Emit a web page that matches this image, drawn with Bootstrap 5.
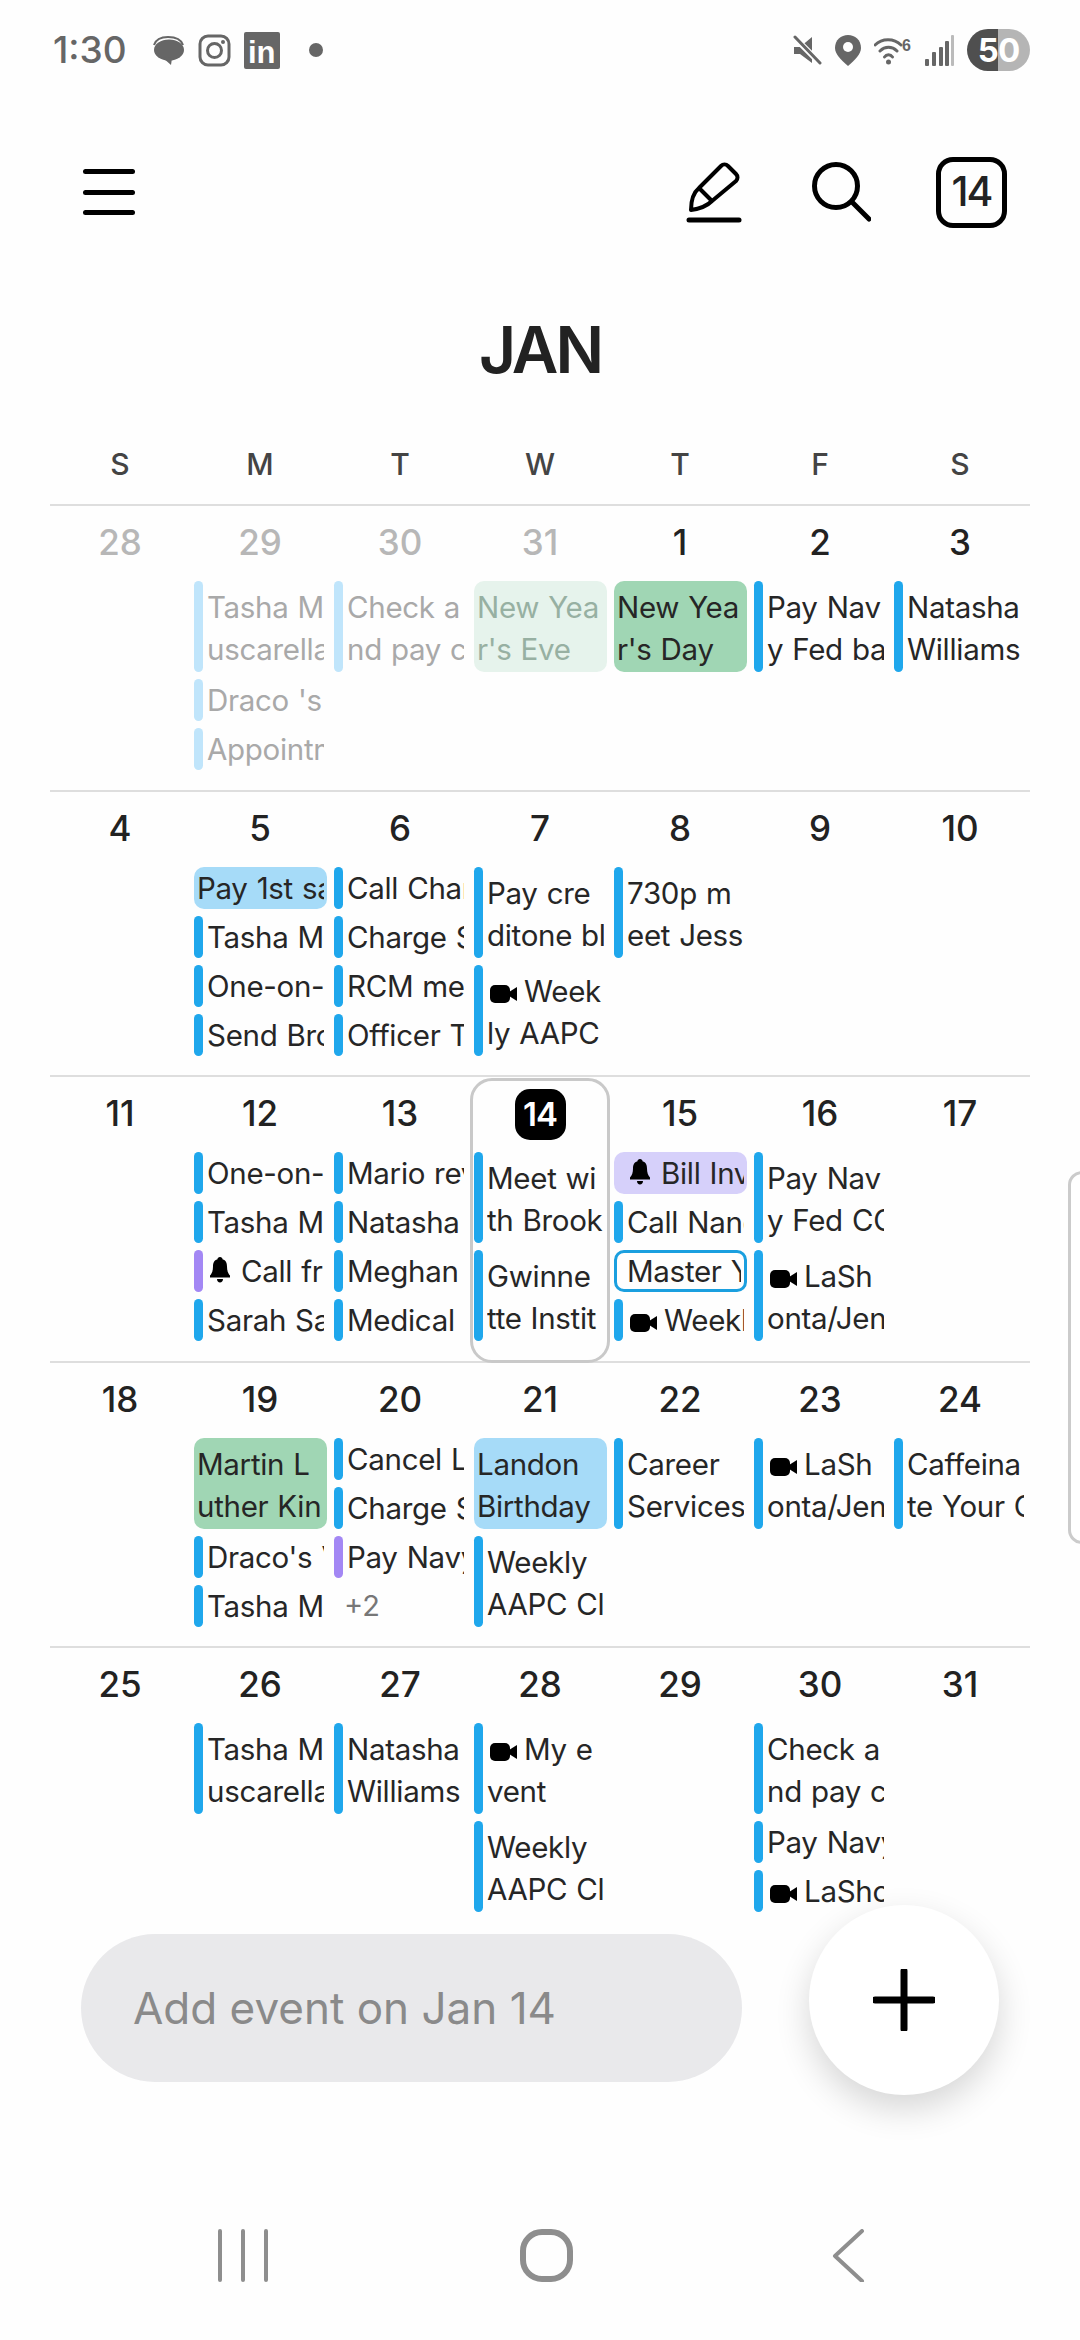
<!doctype html>
<html lang="en">
  <head>
    <meta charset="UTF-8" />
    <meta name="viewport" content="width=device-width, initial-scale=1.0" />
    <title>Calendar</title>
    <link href="https://cdn.jsdelivr.net/npm/bootstrap@5.3.0/dist/css/bootstrap.min.css" rel="stylesheet" />
    <style>
      body {
        width: 1080px;
        height: 2340px;
        overflow: hidden;
        background: #fefefe;
        font-family: Inter, "Liberation Sans", sans-serif;
        color: #222;
      }
      .screen {
        height: 2340px;
        overflow: hidden;
      }
      .status-bar {
        height: 100px;
        padding: 0 50px 0 53px;
        color: #666;
      }
      .status-time {
        font-size: 37px;
        font-weight: 500;
        width: 100px;
      }
      .st-left svg {
        margin-right: 13px;
      }
      .st-right svg {
        margin-right: 13px;
      }
      .batt {
        width: 63px;
        height: 42px;
        border-radius: 21px;
        background: linear-gradient(90deg, #4f4f4f 50%, #b5b5b5 50%);
        color: #fff;
        font-size: 33px;
        font-weight: 700;
        line-height: 42px;
        letter-spacing: -1px;
      }
      .app-bar {
        height: 184px;
        padding: 0 73px 0 83px;
      }
      .burger {
        width: 52px;
        height: 46px;
      }
      .burger span {
        height: 5px;
        border-radius: 3px;
        background: #000;
      }
      .pencil-ico {
        margin-right: 70px;
      }
      .search-ico {
        margin-right: 65px;
      }
      .today-btn {
        width: 71px;
        height: 71px;
        border: 5px solid #000;
        border-radius: 17px;
        font-size: 41px;
        font-weight: 500;
        letter-spacing: -2px;
        color: #222;
      }
      .month-title {
        height: 132px;
        margin: 0;
        font-size: 64px;
        font-weight: 600;
        line-height: 132px;
        letter-spacing: -3px;
        color: #222;
      }
      .cal-wrap {
        padding: 0 50px;
      }
      .weekdays {
        height: 88px;
        line-height: 96px;
        font-size: 30px;
        font-weight: 500;
        color: #444;
      }
      .cal-weeks {
        height: 1430px;
        overflow: hidden;
      }
      .week {
        height: 285.5px;
        border-top: 2px solid #dedede;
      }
      .day-cell {
        position: relative;
        min-width: 0;
      }
      .day-num {
        height: 75px;
        line-height: 73px;
        font-size: 35px;
        font-weight: 500;
        text-align: center;
        color: #222;
      }
      .past .day-num {
        color: #b7b7b7;
      }
      .ev {
        display: flex;
        width: 133px;
        height: 42px;
        margin: 0 3px 7px 4px;
        border-radius: 5px;
        font-size: 29.5px;
        line-height: 42px;
        color: #262626;
        letter-spacing: -0.3px;
        word-spacing: 1px;
        white-space: nowrap;
      }
      .ev::before {
        content: "";
        flex: 0 0 9px;
        margin-right: 4px;
        border-radius: 5px;
        background: #1fa7ec;
      }
      .ev-txt {
        flex: 1;
        min-width: 0;
        margin-right: 3px;
        overflow: hidden;
      }
      .ev-txt span {
        display: block;
      }
      .tall {
        height: 91px;
      }
      .tall .ev-txt {
        padding-top: 5px;
      }
      .ev svg {
        vertical-align: -1px;
      }
      .vid-ico {
        margin-left: 3px;
        margin-right: -2px;
      }
      .bell-ico {
        margin-left: 3px;
        margin-right: 2px;
      }
      .solid {
        border-radius: 10px;
        padding-left: 3px;
      }
      .solid::before {
        display: none;
      }
      .ev-green {
        background: #a0d6b4;
      }
      .ev-sky {
        background: #a6dbf8;
      }
      .ev-lilac {
        background: #d6d0fa;
      }
      .ev-lilac .ev-txt,
      .ev-outline .ev-txt {
        padding-left: 10px;
      }
      .ev-outline {
        border: 3px solid #1a9fdf;
        line-height: 36px;
        padding-left: 0;
      }
      .ev-purple::before {
        background: #a387f4;
      }
      .past .ev {
        color: #a9a9a9;
      }
      .past .ev::before {
        background: #c0e5fb;
      }
      .past .ev-mint {
        background: #e6f3ec;
        color: #97b0a2;
      }
      .more-count {
        height: 42px;
        padding-left: 14px;
        font-size: 29px;
        line-height: 42px;
        color: #777;
      }
      .today-frame {
        position: absolute;
        top: 1px;
        left: 0;
        right: 0;
        bottom: -2px;
        border: 3px solid #c9c9c9;
        border-radius: 22px;
        pointer-events: none;
      }
      .today-chip {
        display: inline-block;
        width: 51px;
        height: 51px;
        border-radius: 15px;
        background: #000;
        color: #fff;
        font-size: 33px;
        font-weight: 600;
        line-height: 51px;
        letter-spacing: -1px;
      }
      .add-bar {
        width: 661px;
        height: 148px;
        margin-left: 81px;
        padding-left: 52px;
        background: #e9e9eb;
        font-size: 44px;
        color: #8a8a8a;
      }
      .fab {
        position: absolute;
        left: 809px;
        top: 1905px;
        width: 190px;
        height: 190px;
        background: #fff;
        box-shadow: 0 14px 34px rgba(0, 0, 0, 0.16);
      }
      .edge-handle {
        position: absolute;
        left: 1068px;
        top: 1171px;
        width: 30px;
        height: 373px;
        border: 3px solid #cbcbcb;
        border-radius: 14px;
        background: #fff;
      }
      .nav-bar {
        height: 53px;
        margin-top: 147px;
      }
    </style>
  </head>
  <body>
    <div class="screen position-relative">
      <div class="status-bar d-flex align-items-center">
        <span class="status-time">1:30</span>
        <div class="st-left d-flex align-items-center">
          <svg width="32" height="31" viewBox="0 0 32 31">
            <path d="M1 10C3 4 8 2 15 2s13 2 15 8" fill="none" stroke="#666" stroke-width="2" />
            <ellipse cx="16" cy="15" rx="15" ry="10.500" fill="#666" />
            <path d="M9 22l9 8 1-7z" fill="#666" />
          </svg>
          <svg width="33" height="33" viewBox="0 0 33 33">
            <rect x="2" y="2" width="29" height="29" rx="8" fill="none" stroke="#666" stroke-width="3" />
            <circle cx="16.500" cy="16.500" r="7" fill="none" stroke="#666" stroke-width="3" />
            <circle cx="25" cy="8" r="2" fill="#666" />
          </svg>
          <svg width="36" height="37" viewBox="0 0 36 37">
            <rect width="36" height="37" rx="2" fill="#666" />
            <text x="4" y="31" font-family="Liberation Sans" font-weight="700" font-size="31" fill="#fefefe">in</text>
          </svg>
          <svg class="ms-3" width="14" height="14" viewBox="0 0 14 14"><circle cx="7" cy="7" r="7" fill="#666" /></svg>
        </div>
        <div class="st-right d-flex align-items-center ms-auto">
          <svg width="30" height="30" viewBox="0 0 30 30">
            <path d="M2 12h6L20 2v26L8 19H2z" fill="#666" />
            <path d="M2 2l26 26" stroke="#fefefe" stroke-width="6" />
            <path d="M3 2l25 26" stroke="#666" stroke-width="3" stroke-linecap="round" />
          </svg>
          <svg width="26" height="31" viewBox="0 0 26 31">
            <path d="M13 0C6 0 0 5 0 13c0 6 6 12 13 18 7-6 13-12 13-18C26 5 20 0 13 0z" fill="#666" />
            <circle cx="13" cy="12" r="5" fill="#fefefe" />
          </svg>
          <svg width="37" height="30" viewBox="0 0 37 30">
            <path d="M1 10C8 3 20 3 27 10M6 16c5-5 12-5 17 0M10.500 22c2-3 6-3 8 0" fill="none" stroke="#666" stroke-width="3" stroke-linecap="round" />
            <circle cx="14.500" cy="27" r="2.500" fill="#666" />
            <text x="28" y="16" font-family="Liberation Sans" font-weight="700" font-size="16" fill="#666">6</text>
          </svg>
          <svg width="30" height="31" viewBox="0 0 30 31">
            <rect x="1" y="24" width="4" height="7" rx="1" fill="#666" />
            <rect x="8" y="17" width="4" height="14" rx="1" fill="#666" />
            <rect x="15" y="12" width="4" height="19" rx="1" fill="#666" />
            <rect x="21" y="6" width="4" height="25" rx="1" fill="#666" />
            <rect x="27" y="0" width="3" height="31" rx="1" fill="#bbb" />
          </svg>
          <div class="batt text-center">50</div>
        </div>
      </div>

      <div class="app-bar d-flex align-items-center">
        <div class="burger d-flex flex-column justify-content-between"><span></span><span></span><span></span></div>
        <svg class="pencil-ico ms-auto" width="56" height="62" viewBox="0 0 56 62">
          <path d="M5 49C5 40 7 32 13 27L35 5c2-2 5-2 7 0l8 8c2 2 2 5 0 7L26 40C20 46 12 48 5 49z" fill="none" stroke="#000" stroke-width="4" stroke-linejoin="round" />
          <path d="M13 27l13 13" stroke="#000" stroke-width="4" />
          <path d="M3 59h50" stroke="#000" stroke-width="5" stroke-linecap="round" />
        </svg>
        <svg class="search-ico" width="59" height="60" viewBox="0 0 59 60">
          <circle cx="24" cy="24" r="21.500" fill="none" stroke="#000" stroke-width="5" />
          <path d="M40 40l17 17" stroke="#000" stroke-width="5" stroke-linecap="round" />
        </svg>
        <div class="today-btn d-flex align-items-center justify-content-center">14</div>
      </div>

      <h1 class="month-title text-center">JAN</h1>

      <div class="cal-wrap">
        <div class="weekdays row g-0 flex-nowrap text-center">
          <div class="col">S</div>
          <div class="col">M</div>
          <div class="col">T</div>
          <div class="col">W</div>
          <div class="col">T</div>
          <div class="col">F</div>
          <div class="col">S</div>
        </div>

        <div class="cal-weeks">
          <div class="week row g-0 flex-nowrap">
            <div class="col day-cell past"><div class="day-num">28</div></div>
            <div class="col day-cell past">
              <div class="day-num">29</div>
              <div class="ev tall"><div class="ev-txt"><span>Tasha M</span><span>uscarella</span></div></div>
              <div class="ev"><div class="ev-txt">Draco 's</div></div>
              <div class="ev"><div class="ev-txt">Appointm</div></div>
            </div>
            <div class="col day-cell past">
              <div class="day-num">30</div>
              <div class="ev tall"><div class="ev-txt"><span>Check a</span><span>nd pay c</span></div></div>
            </div>
            <div class="col day-cell past">
              <div class="day-num">31</div>
              <div class="ev tall solid ev-mint"><div class="ev-txt"><span>New Yea</span><span>r's Eve</span></div></div>
            </div>
            <div class="col day-cell">
              <div class="day-num">1</div>
              <div class="ev tall solid ev-green"><div class="ev-txt"><span>New Yea</span><span>r's Day</span></div></div>
            </div>
            <div class="col day-cell">
              <div class="day-num">2</div>
              <div class="ev tall"><div class="ev-txt"><span>Pay Nav</span><span>y Fed ba</span></div></div>
            </div>
            <div class="col day-cell">
              <div class="day-num">3</div>
              <div class="ev tall"><div class="ev-txt"><span>Natasha</span><span>Williams</span></div></div>
            </div>
          </div>

          <div class="week row g-0 flex-nowrap">
            <div class="col day-cell"><div class="day-num">4</div></div>
            <div class="col day-cell">
              <div class="day-num">5</div>
              <div class="ev solid ev-sky"><div class="ev-txt">Pay 1st sa</div></div>
              <div class="ev"><div class="ev-txt">Tasha M</div></div>
              <div class="ev"><div class="ev-txt">One-on-</div></div>
              <div class="ev"><div class="ev-txt">Send Bro</div></div>
            </div>
            <div class="col day-cell">
              <div class="day-num">6</div>
              <div class="ev"><div class="ev-txt">Call Char</div></div>
              <div class="ev"><div class="ev-txt">Charge S</div></div>
              <div class="ev"><div class="ev-txt">RCM me</div></div>
              <div class="ev"><div class="ev-txt">Officer Tr</div></div>
            </div>
            <div class="col day-cell">
              <div class="day-num">7</div>
              <div class="ev tall"><div class="ev-txt"><span>Pay cre</span><span>ditone bl</span></div></div>
              <div class="ev tall"><div class="ev-txt"><span><svg class="vid-ico" width="27" height="18" viewBox="0 0 27 18"><rect width="20" height="18" rx="5" fill="#000" /><path d="M19 7l8-5v14l-8-5z" fill="#000" /></svg> Week</span><span>ly AAPC</span></div></div>
            </div>
            <div class="col day-cell">
              <div class="day-num">8</div>
              <div class="ev tall"><div class="ev-txt"><span>730p m</span><span>eet Jesse</span></div></div>
            </div>
            <div class="col day-cell"><div class="day-num">9</div></div>
            <div class="col day-cell"><div class="day-num">10</div></div>
          </div>

          <div class="week row g-0 flex-nowrap">
            <div class="col day-cell"><div class="day-num">11</div></div>
            <div class="col day-cell">
              <div class="day-num">12</div>
              <div class="ev"><div class="ev-txt">One-on-</div></div>
              <div class="ev"><div class="ev-txt">Tasha M</div></div>
              <div class="ev ev-purple"><div class="ev-txt"><svg class="bell-ico" width="20" height="26" viewBox="0 0 20 26"><path d="M10 0c1.500 0 2.500 1 2.500 2.200C16 3.200 17 6 17 9.500c0 4 1 7 3 9v2H0v-2c2-2 3-5 3-9C3 6 4 3.200 7.500 2.200 7.500 1 8.500 0 10 0zM7 22h6c0 2-1.300 3.500-3 3.500S7 24 7 22z" fill="#000" /></svg> Call fr</div></div>
              <div class="ev"><div class="ev-txt">Sarah Sa</div></div>
            </div>
            <div class="col day-cell">
              <div class="day-num">13</div>
              <div class="ev"><div class="ev-txt">Mario rev</div></div>
              <div class="ev"><div class="ev-txt">Natasha</div></div>
              <div class="ev"><div class="ev-txt">Meghan</div></div>
              <div class="ev"><div class="ev-txt">Medical</div></div>
            </div>
            <div class="col day-cell">
              <div class="day-num"><span class="today-chip">14</span></div>
              <div class="ev tall"><div class="ev-txt"><span>Meet wi</span><span>th Brook</span></div></div>
              <div class="ev tall"><div class="ev-txt"><span>Gwinne</span><span>tte Instit</span></div></div>
              <div class="today-frame"></div>
            </div>
            <div class="col day-cell">
              <div class="day-num">15</div>
              <div class="ev solid ev-lilac"><div class="ev-txt"><svg class="bell-ico" width="20" height="26" viewBox="0 0 20 26"><path d="M10 0c1.500 0 2.500 1 2.500 2.200C16 3.200 17 6 17 9.500c0 4 1 7 3 9v2H0v-2c2-2 3-5 3-9C3 6 4 3.200 7.500 2.200 7.500 1 8.500 0 10 0zM7 22h6c0 2-1.300 3.500-3 3.500S7 24 7 22z" fill="#000" /></svg> Bill Inv</div></div>
              <div class="ev"><div class="ev-txt">Call Nanc</div></div>
              <div class="ev solid ev-outline"><div class="ev-txt">Master Y</div></div>
              <div class="ev"><div class="ev-txt"><svg class="vid-ico" width="27" height="18" viewBox="0 0 27 18"><rect width="20" height="18" rx="5" fill="#000" /><path d="M19 7l8-5v14l-8-5z" fill="#000" /></svg> Weekl</div></div>
            </div>
            <div class="col day-cell">
              <div class="day-num">16</div>
              <div class="ev tall"><div class="ev-txt"><span>Pay Nav</span><span>y Fed CC</span></div></div>
              <div class="ev tall"><div class="ev-txt"><span><svg class="vid-ico" width="27" height="18" viewBox="0 0 27 18"><rect width="20" height="18" rx="5" fill="#000" /><path d="M19 7l8-5v14l-8-5z" fill="#000" /></svg> LaSh</span><span>onta/Jen</span></div></div>
            </div>
            <div class="col day-cell"><div class="day-num">17</div></div>
          </div>

          <div class="week row g-0 flex-nowrap">
            <div class="col day-cell"><div class="day-num">18</div></div>
            <div class="col day-cell">
              <div class="day-num">19</div>
              <div class="ev tall solid ev-green"><div class="ev-txt"><span>Martin L</span><span>uther Kin</span></div></div>
              <div class="ev"><div class="ev-txt">Draco's V</div></div>
              <div class="ev"><div class="ev-txt">Tasha M</div></div>
            </div>
            <div class="col day-cell">
              <div class="day-num">20</div>
              <div class="ev"><div class="ev-txt">Cancel L</div></div>
              <div class="ev"><div class="ev-txt">Charge S</div></div>
              <div class="ev ev-purple"><div class="ev-txt">Pay Navy</div></div>
              <div class="more-count">+2</div>
            </div>
            <div class="col day-cell">
              <div class="day-num">21</div>
              <div class="ev tall solid ev-sky"><div class="ev-txt"><span>Landon</span><span>Birthday</span></div></div>
              <div class="ev tall"><div class="ev-txt"><span>Weekly</span><span>AAPC Cl</span></div></div>
            </div>
            <div class="col day-cell">
              <div class="day-num">22</div>
              <div class="ev tall"><div class="ev-txt"><span>Career</span><span>Services</span></div></div>
            </div>
            <div class="col day-cell">
              <div class="day-num">23</div>
              <div class="ev tall"><div class="ev-txt"><span><svg class="vid-ico" width="27" height="18" viewBox="0 0 27 18"><rect width="20" height="18" rx="5" fill="#000" /><path d="M19 7l8-5v14l-8-5z" fill="#000" /></svg> LaSh</span><span>onta/Jen</span></div></div>
            </div>
            <div class="col day-cell">
              <div class="day-num">24</div>
              <div class="ev tall"><div class="ev-txt"><span>Caffeina</span><span>te Your C</span></div></div>
            </div>
          </div>

          <div class="week row g-0 flex-nowrap">
            <div class="col day-cell"><div class="day-num">25</div></div>
            <div class="col day-cell">
              <div class="day-num">26</div>
              <div class="ev tall"><div class="ev-txt"><span>Tasha M</span><span>uscarella</span></div></div>
            </div>
            <div class="col day-cell">
              <div class="day-num">27</div>
              <div class="ev tall"><div class="ev-txt"><span>Natasha</span><span>Williams</span></div></div>
            </div>
            <div class="col day-cell">
              <div class="day-num">28</div>
              <div class="ev tall"><div class="ev-txt"><span><svg class="vid-ico" width="27" height="18" viewBox="0 0 27 18"><rect width="20" height="18" rx="5" fill="#000" /><path d="M19 7l8-5v14l-8-5z" fill="#000" /></svg> My e</span><span>vent</span></div></div>
              <div class="ev tall"><div class="ev-txt"><span>Weekly</span><span>AAPC Cl</span></div></div>
            </div>
            <div class="col day-cell"><div class="day-num">29</div></div>
            <div class="col day-cell">
              <div class="day-num">30</div>
              <div class="ev tall"><div class="ev-txt"><span>Check a</span><span>nd pay c</span></div></div>
              <div class="ev"><div class="ev-txt">Pay Navy</div></div>
              <div class="ev"><div class="ev-txt"><svg class="vid-ico" width="27" height="18" viewBox="0 0 27 18"><rect width="20" height="18" rx="5" fill="#000" /><path d="M19 7l8-5v14l-8-5z" fill="#000" /></svg> LaSho</div></div>
            </div>
            <div class="col day-cell"><div class="day-num">31</div></div>
          </div>
        </div>
      </div>

      <div class="add-bar rounded-pill d-flex align-items-center">Add event on Jan 14</div>

      <div class="nav-bar d-flex">
        <svg width="1080" height="53" viewBox="0 0 1080 53">
          <path d="M220 2v49M243 2v49M266 2v49" stroke="#8e8e8e" stroke-width="4" stroke-linecap="round" />
          <rect x="523" y="3" width="47" height="47" rx="19" fill="none" stroke="#8e8e8e" stroke-width="6" />
          <path d="M862 2l-27 25 27 25" fill="none" stroke="#8e8e8e" stroke-width="4" stroke-linecap="round" stroke-linejoin="round" />
        </svg>
      </div>

      <div class="fab rounded-circle d-flex align-items-center justify-content-center">
        <svg width="62" height="62" viewBox="0 0 62 62">
          <path d="M31 2v58M2 31h58" stroke="#000" stroke-width="7" stroke-linecap="round" />
        </svg>
      </div>
      <div class="edge-handle"></div>
    </div>
    <script src="https://cdn.jsdelivr.net/npm/bootstrap@5.3.0/dist/js/bootstrap.bundle.min.js"></script>
  </body>
</html>
